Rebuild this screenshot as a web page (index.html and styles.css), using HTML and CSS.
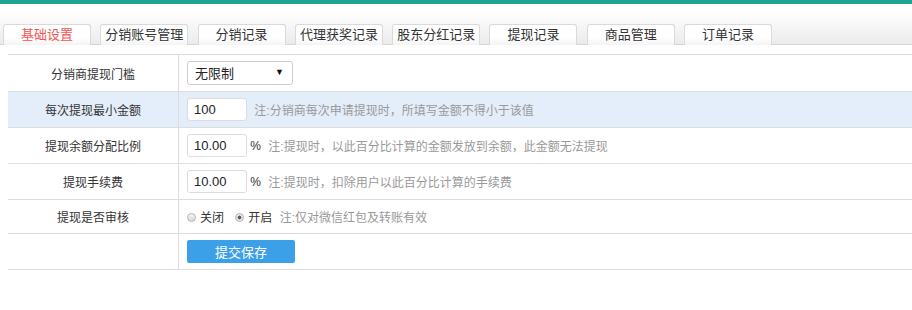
FILE: index.html
```html
<!DOCTYPE html>
<html lang="zh-CN">
<head>
    <meta charset="UTF-8">
    <title>基础设置</title>
    <link rel="stylesheet" href="styles.css">
</head>
<body>
    <div class="topbar"></div>

    <!-- 标签页 -->
    <div class="tabs">
        <a class="tab active">基础设置</a>
        <a class="tab">分销账号管理</a>
        <a class="tab">分销记录</a>
        <a class="tab">代理获奖记录</a>
        <a class="tab">股东分红记录</a>
        <a class="tab">提现记录</a>
        <a class="tab">商品管理</a>
        <a class="tab">订单记录</a>
    </div>

    <table class="form-table">
        <tr>
            <td class="label">分销商提现门槛</td>
            <td>
                <div class="select-box">
                    <select>
                        <option>无限制</option>
                    </select>
                </div>
            </td>
        </tr>
        <tr class="hl">
            <td class="label">每次提现最小金额</td>
            <td>
                <input type="text" class="ipt" value="100">
                <span class="tip">注:分销商每次申请提现时，所填写金额不得小于该值</span>
            </td>
        </tr>
        <tr>
            <td class="label">提现余额分配比例</td>
            <td>
                <input type="text" class="ipt" value="10.00">
                <span class="unit">%</span>
                <span class="tip">注:提现时，以此百分比计算的金额发放到余额，此金额无法提现</span>
            </td>
        </tr>
        <tr>
            <td class="label">提现手续费</td>
            <td>
                <input type="text" class="ipt" value="10.00">
                <span class="unit">%</span>
                <span class="tip">注:提现时，扣除用户以此百分比计算的手续费</span>
            </td>
        </tr>
        <tr class="short">
            <td class="label">提现是否审核</td>
            <td>
                <label class="radio"><i></i>关闭</label>
                <label class="radio checked"><i></i>开启</label>
                <span class="tip">注:仅对微信红包及转账有效</span>
            </td>
        </tr>
        <tr>
            <td class="label"></td>
            <td><button class="btn">提交保存</button></td>
        </tr>
    </table>
</body>
</html>
```

FILE: styles.css
```css
body {
    margin: 0;
    font-family: "Liberation Sans", "Noto Sans CJK SC", sans-serif;
    font-size: 12px;
    color: #333;
    background: #fff;
}
.topbar {
    height: 4px;
    background: #1fa592;
}
.tabs {
    display: flex;
    gap: 9.3px;
    height: 40px;
    padding-left: 3px;
    align-items: flex-end;
    background: linear-gradient(#fff 20%, #ebebeb);
    border-bottom: 1px solid #d6d6d6;
}
.tab {
    width: 86px;
    height: 20px;
    line-height: 20px;
    margin-bottom: -1px;
    text-align: center;
    font-size: 13px;
    color: #333;
    background: linear-gradient(#fff 60%, #f4f4f4);
    border: 1px solid #dadada;
    border-bottom: none;
    border-radius: 3px 3px 0 0;
    cursor: pointer;
}
.tab.active {
    color: #f25552;
}
.form-table {
    margin: 9px 0 0 8px;
    width: 904px;
    table-layout: fixed;
    border-collapse: collapse;
}
.form-table td {
    border-top: 1px solid #ddd;
    border-bottom: 1px solid #ddd;
    padding: 6px 0 6px 8px;
    height: 23px;
    vertical-align: middle;
}
.form-table td.label {
    width: 170px;
    padding: 0;
    text-align: center;
    border-right: 1px solid #ddd;
}
.form-table tr.short td {
    height: 21px;
}
.form-table tr.hl td {
    background: #e4eefa;
}
.select-box {
    position: relative;
    width: 106px;
    height: 24px;
}
.select-box select {
    appearance: none;
    width: 106px;
    height: 24px;
    padding: 0 0 0 7px;
    font-family: inherit;
    font-size: 13px;
    color: #222;
    background: #fff;
    border: 1px solid #ccc;
    border-radius: 3px;
    outline: none;
}
.select-box::after {
    content: "▼";
    position: absolute;
    right: 9px;
    top: 6px;
    font-size: 9px;
    color: #111;
    pointer-events: none;
}
.ipt {
    width: 60px;
    height: 23px;
    box-sizing: border-box;
    padding: 0 6px;
    font-family: inherit;
    font-size: 13px;
    color: #222;
    border: 1px solid #ddd;
    border-radius: 3px;
    vertical-align: middle;
    outline: none;
}
.unit {
    margin-left: 0;
    font-size: 12px;
    color: #333;
    vertical-align: middle;
}
.tip {
    margin-left: 4px;
    color: #999;
    vertical-align: middle;
}
.radio {
    display: inline-block;
    font-size: 12px;
    color: #333;
    vertical-align: middle;
}
.radio + .radio {
    margin-left: 8px;
}
.radio i {
    display: inline-block;
    width: 7px;
    height: 7px;
    margin-right: 4px;
    border: 1px solid #b5b5b5;
    border-radius: 50%;
    background: linear-gradient(#f6f6f6, #d8d8d8);
    vertical-align: 0;
}
.radio.checked i {
    background: radial-gradient(circle, #555 0, #666 35%, #e8e8e8 45%);
}
.btn {
    width: 108px;
    height: 23px;
    padding: 0;
    font-family: inherit;
    font-size: 13px;
    color: #fff;
    background: #3ca0e8;
    border: none;
    border-radius: 2px;
    cursor: pointer;
}
```
